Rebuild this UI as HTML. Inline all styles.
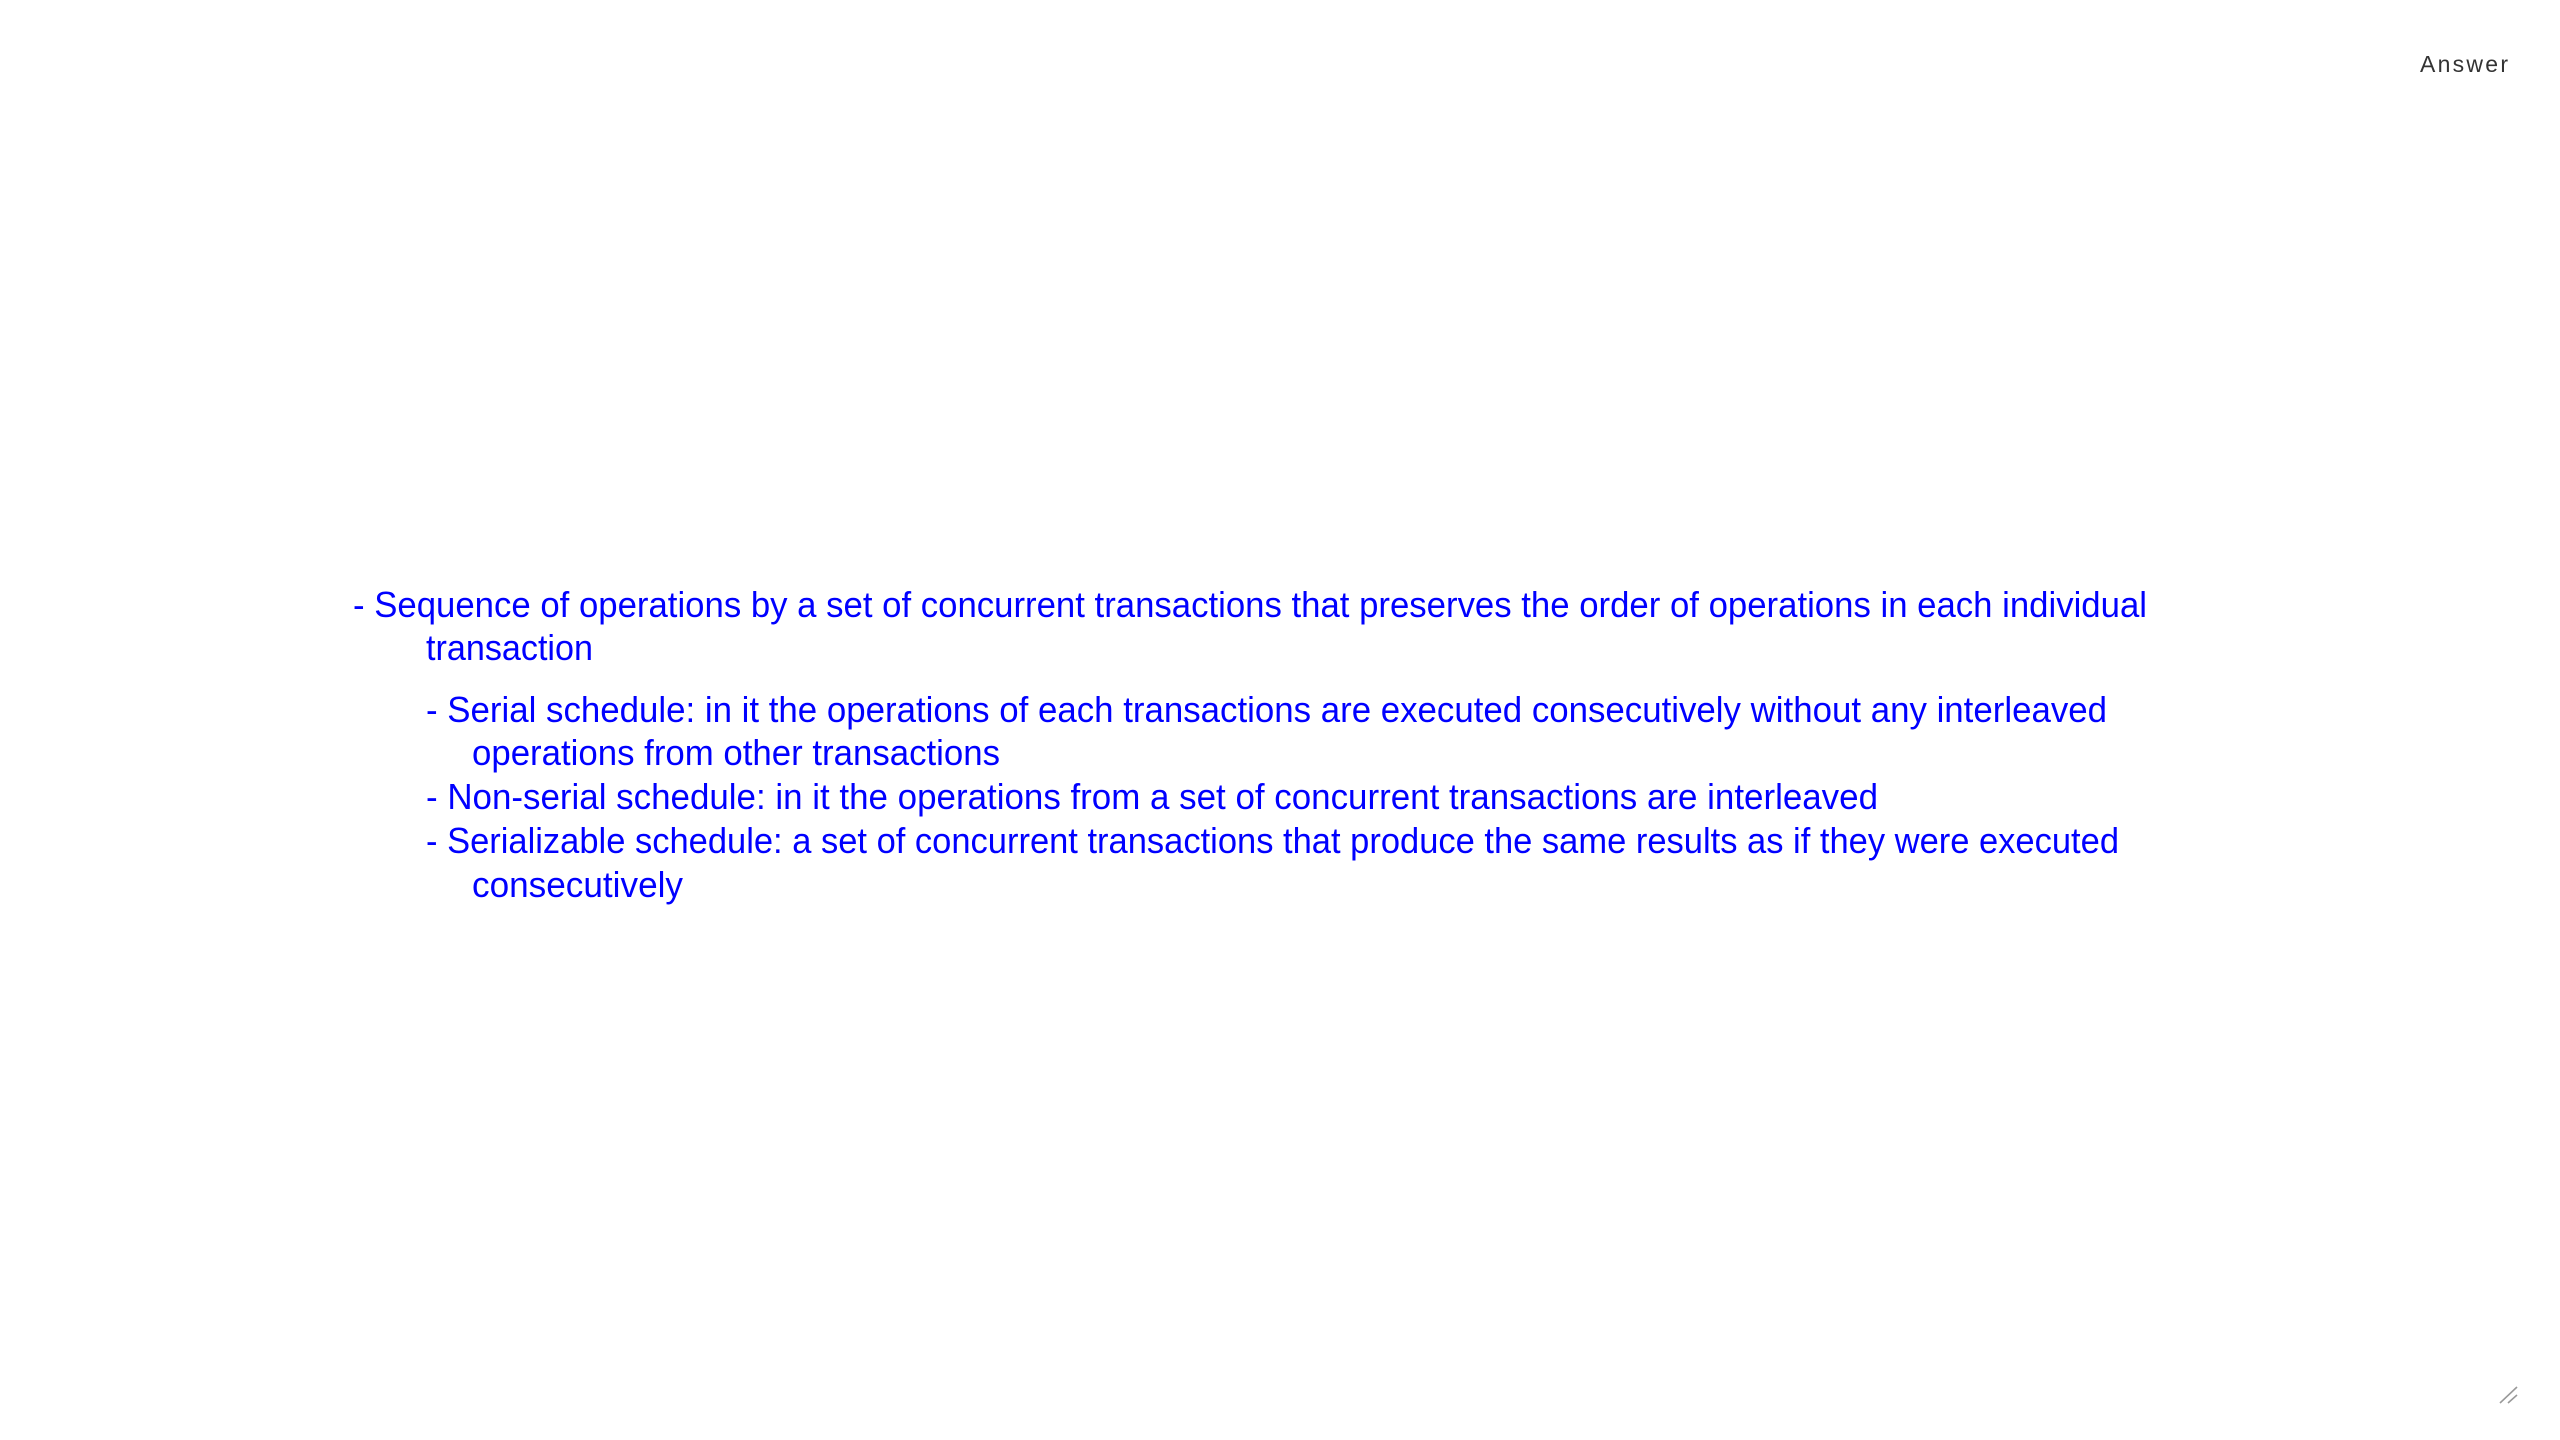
<!DOCTYPE html>
<html><head><meta charset="utf-8"><style>
html,body{margin:0;padding:0;background:#fff;width:2560px;height:1440px;overflow:hidden}
svg{display:block}
.t{font-family:"Liberation Sans",sans-serif;font-size:36px;fill:#0000ff}
</style></head><body>
<svg width="2560" height="1440" viewBox="0 0 2560 1440" xmlns="http://www.w3.org/2000/svg">
<text x="2420" y="72" font-family="Liberation Sans, sans-serif" font-size="23" fill="#333" textLength="88" lengthAdjust="spacing">Answer</text>
<text class="t" x="353" y="617" textLength="1794" lengthAdjust="spacingAndGlyphs">- Sequence of operations by a set of concurrent transactions that preserves the order of operations in each individual</text>
<text class="t" x="426" y="660" textLength="167" lengthAdjust="spacingAndGlyphs">transaction</text>
<text class="t" x="426" y="722" textLength="1681" lengthAdjust="spacingAndGlyphs">- Serial schedule: in it the operations of each transactions are executed consecutively without any interleaved</text>
<text class="t" x="472" y="765" textLength="528" lengthAdjust="spacingAndGlyphs">operations from other transactions</text>
<text class="t" x="426" y="809" textLength="1452" lengthAdjust="spacingAndGlyphs">- Non-serial schedule: in it the operations from a set of concurrent transactions are interleaved</text>
<text class="t" x="426" y="853" textLength="1693" lengthAdjust="spacingAndGlyphs">- Serializable schedule: a set of concurrent transactions that produce the same results as if they were executed</text>
<text class="t" x="472" y="897" textLength="211" lengthAdjust="spacingAndGlyphs">consecutively</text>
<g stroke="#999" stroke-width="1.6">
<line x1="2500" y1="1403" x2="2517" y2="1387"/>
<line x1="2508" y1="1403" x2="2517" y2="1395"/>
</g>
</svg>
</body></html>
